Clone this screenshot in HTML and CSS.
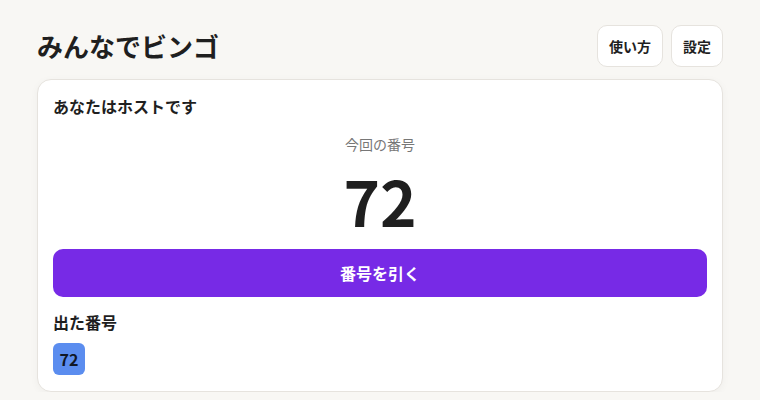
FILE: index.html
```html
<!DOCTYPE html>
<html lang="ja">
<head>
<meta charset="utf-8">
<link rel="stylesheet" href="styles.css">
</head>
<body>
<div class="page">
  <header class="top">
    <h1 class="title">みんなでビンゴ</h1>
    <div class="actions">
      <button class="ghost">使い方</button>
      <button class="ghost">設定</button>
    </div>
  </header>
  <section class="card">
    <div class="role">あなたはホストです</div>
    <div class="label">今回の番号</div>
    <div class="current">72</div>
    <button class="draw">番号を引く</button>
    <div class="sub">出た番号</div>
    <div class="chips">
      <span class="chip">72</span>
    </div>
  </section>
</div>
</body>
</html>
```
FILE: styles.css
```css
* { box-sizing: border-box; }
html, body { margin: 0; }
body {
  background: #f8f7f4;
  color: #1f1f1f;
  font-family: "Noto Sans CJK JP", "Noto Sans", sans-serif;
}
.page {
  padding: 25px 37px 0;
}
.top {
  display: flex;
  align-items: center;
  justify-content: space-between;
  height: 42px;
}
.title {
  margin: 0;
  font-size: 26px;
  font-weight: 700;
  line-height: 36px;
  color: #1f1f1f;
}
.actions {
  display: flex;
  gap: 8px;
}
.ghost {
  height: 42px;
  padding: 0 11px;
  border: 1px solid #e6e3de;
  border-radius: 10px;
  background: #fff;
  font: 700 14px "Noto Sans CJK JP", "Noto Sans", sans-serif;
  color: #1f1f1f;
}
.card {
  margin-top: 12px;
  background: #fff;
  border: 1px solid #e6e3de;
  border-radius: 14px;
  padding: 15px 15px 16px;
  box-shadow: 0 2px 8px rgba(0,0,0,0.04);
  display: flex;
  flex-direction: column;
}
.role {
  font-size: 16px;
  font-weight: 700;
  line-height: 22px;
}
.label {
  margin-top: 17px;
  text-align: center;
  font-size: 14px;
  line-height: 20px;
  color: #777;
}
.current {
  margin-top: 1px;
  text-align: center;
  font-size: 62px;
  font-weight: 700;
  line-height: 90px;
  color: #1f1f1f;
}
.draw {
  margin-top: 4px;
  height: 48px;
  border: none;
  border-radius: 10px;
  background: #772ae6;
  color: #fff;
  font: 700 16px "Noto Sans CJK JP", "Noto Sans", sans-serif;
}
.sub {
  margin-top: 14px;
  font-size: 16px;
  font-weight: 700;
  line-height: 22px;
}
.chips {
  margin-top: 10px;
  display: flex;
  gap: 6px;
}
.chip {
  width: 32px;
  height: 32px;
  border-radius: 6px;
  background: #5b8def;
  color: #111827;
  font-size: 16px;
  font-weight: 700;
  display: flex;
  align-items: center;
  justify-content: center;
}
```
